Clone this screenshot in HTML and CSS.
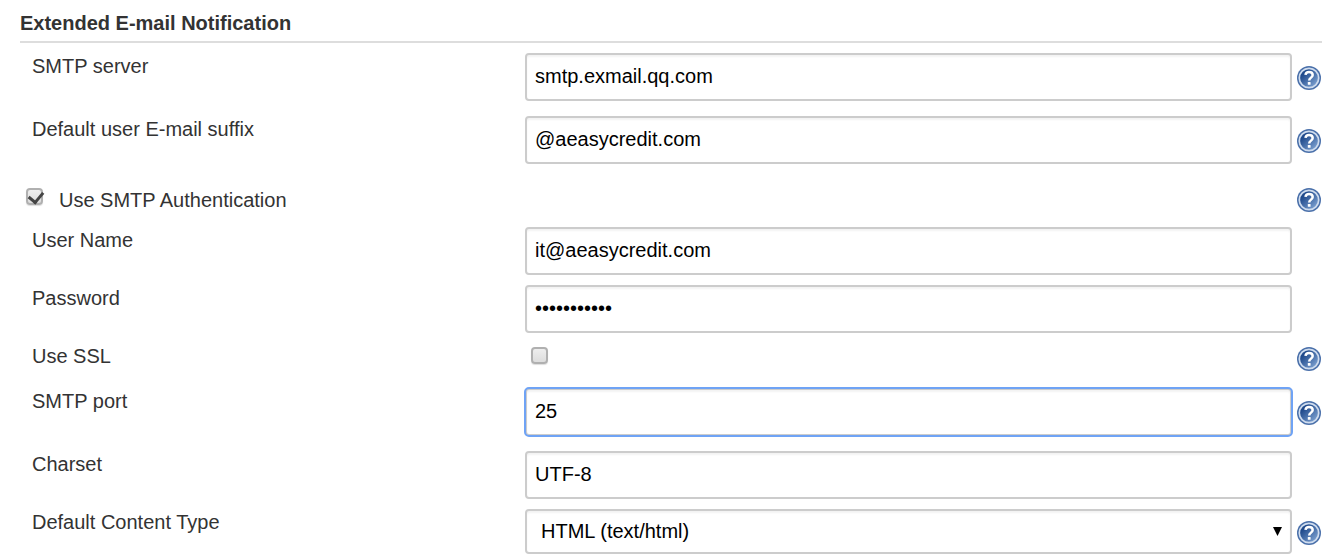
FILE: index.html
```html
<!DOCTYPE html>
<html lang="en">
<head>
<meta charset="utf-8">
<title>Extended E-mail Notification</title>
<link rel="stylesheet" href="styles.css">
</head>
<body>
<svg class="defs" aria-hidden="true">
  <defs>
    <linearGradient id="blue" x1="0" y1="0" x2="1" y2="1">
      <stop offset="0.25" stop-color="#204a8c"/><stop offset="1" stop-color="#8fb2de"/>
    </linearGradient>
    <symbol id="help" viewBox="0 0 24 24">
      <circle cx="12" cy="12" r="12" fill="#4a70aa"/>
      <circle cx="12" cy="12" r="9.700" fill="url(#blue)" stroke="#cfdcee" stroke-width="1.700"/>
      <path d="M8.500 8.900C8.700 7 10 6.100 12 6.100c2.200 0 3.700 1.100 3.700 3 0 2.500-3.500 2.600-3.500 5.400" fill="none" stroke="#fff" stroke-width="2.500"/>
      <rect x="10.800" y="16" width="2.800" height="2.800" rx=".6" fill="#fff"/>
    </symbol>
  </defs>
</svg>
<form class="section">
  <h1 class="heading">Extended E-mail Notification</h1>
  <div class="row spaced">
    <label class="label" for="server">SMTP server</label>
    <input class="field" id="server" type="text" value="smtp.exmail.qq.com">
    <button class="help" type="button" aria-label="Help for SMTP server"><svg class="icon"><use href="#help"/></svg></button>
  </div>
  <div class="row spaced">
    <label class="label" for="suffix">Default user E-mail suffix</label>
    <input class="field" id="suffix" type="text" value="@aeasycredit.com">
    <button class="help" type="button" aria-label="Help for Default user E-mail suffix"><svg class="icon"><use href="#help"/></svg></button>
  </div>
  <div class="row auth">
    <div class="option">
      <input class="check" id="auth" type="checkbox" checked>
      <label for="auth">Use SMTP Authentication</label>
    </div>
    <button class="help" type="button" aria-label="Help for Use SMTP Authentication"><svg class="icon"><use href="#help"/></svg></button>
  </div>
  <div class="row">
    <label class="label" for="user">User Name</label>
    <input class="field" id="user" type="text" value="it@aeasycredit.com">
  </div>
  <div class="row">
    <label class="label" for="password">Password</label>
    <input class="field" id="password" type="password" value="abcdefghijk">
  </div>
  <div class="row spaced ssl">
    <label class="label" for="ssl">Use SSL</label>
    <input class="check" id="ssl" type="checkbox">
    <button class="help" type="button" aria-label="Help for Use SSL"><svg class="icon"><use href="#help"/></svg></button>
  </div>
  <div class="row spaced">
    <label class="label" for="port">SMTP port</label>
    <input class="field active" id="port" type="text" value="25">
    <button class="help" type="button" aria-label="Help for SMTP port"><svg class="icon"><use href="#help"/></svg></button>
  </div>
  <div class="row">
    <label class="label" for="charset">Charset</label>
    <input class="field" id="charset" type="text" value="UTF-8">
  </div>
  <div class="row">
    <label class="label" for="type">Default Content Type</label>
    <div class="picker">
      <select class="field select" id="type"><option>HTML (text/html)</option><option>Plain Text (text/plain)</option></select>
      <svg class="arrow" viewBox="0 0 10 10" preserveAspectRatio="none" aria-hidden="true"><path d="M0 0h10L5 10z"/></svg>
    </div>
    <button class="help" type="button" aria-label="Help for Default Content Type"><svg class="icon"><use href="#help"/></svg></button>
  </div>
</form>
</body>
</html>
```

FILE: styles.css
```css
* { box-sizing: border-box; }
body {
  margin: 0;
  background: #fff;
  color: #333;
  font: 20px/26px "Liberation Sans", Arial, sans-serif;
}
.defs { position: absolute; width: 0; height: 0; }
.section { padding: 10px 15px 0 20px; }
.heading {
  margin: 0 0 10px;
  padding-bottom: 5px;
  border-bottom: 2px solid #ddd;
  font-size: 20px;
  line-height: 26px;
  font-weight: bold;
}
.row {
  display: grid;
  grid-template-columns: minmax(0, 505fr) minmax(0, 767fr) 30px;
  align-items: start;
  margin-bottom: 10px;
}
.spaced { margin-bottom: 15px; }
.label { padding-left: 12px; }
.field {
  width: 100%;
  height: 48px;
  margin: 0;
  padding: 0 8px 2px;
  border: 2px solid #ccc;
  border-radius: 4px;
  background: #fff;
  box-shadow: inset 0 2px 2px rgba(0, 0, 0, 0.05);
  color: #000;
  font: inherit;
}
.active { outline: 2px solid #6fa3f5; outline-offset: -1px; }
.help {
  width: 24px;
  height: 24px;
  margin: 13px 0 0 5px;
  padding: 0;
  border: 0;
  background: none;
}
.icon { display: block; width: 24px; height: 24px; }
.auth { margin-bottom: 14px; padding-top: 8px; }
.option {
  display: flex;
  grid-column: span 2;
  gap: 16px;
  padding-left: 6px;
}
.auth .help { margin-top: 1px; }
.check {
  appearance: none;
  width: 17px;
  height: 17px;
  margin: 1px 0 8px;
  border: 2px solid #b0b0b0;
  border-radius: 4px;
  background: linear-gradient(#eee, #ddd);
  box-shadow: 0 1px 1px #ddd;
}
.check:checked::after {
  content: "";
  display: block;
  width: 7px;
  height: 11px;
  margin: -1px 0 0 3px;
  border: solid #444;
  border-width: 0 3px 3px 0;
  transform: rotate(40deg);
}
.ssl .check { margin: 4px 0 9px 6px; }
.ssl .help { margin-top: 4px; }
.picker { position: relative; }
.select {
  display: block;
  height: 45px;
  padding: 0 32px 2px 14px;
  appearance: none;
}
.picker + .help { margin-top: 12px; }
.arrow {
  position: absolute;
  top: 18px;
  right: 10px;
  width: 9px;
  height: 9px;
  pointer-events: none;
}
```
